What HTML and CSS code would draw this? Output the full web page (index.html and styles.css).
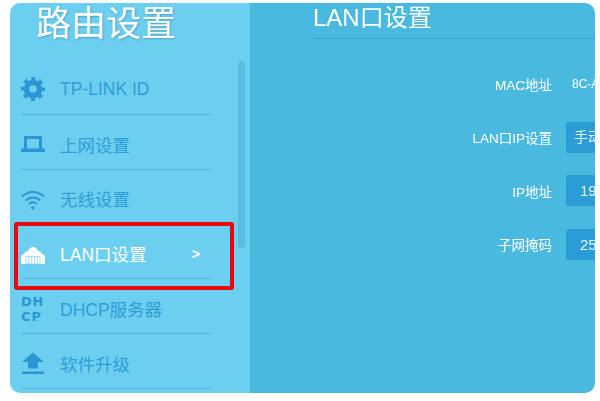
FILE: index.html
```html
<!DOCTYPE html>
<html lang="en">
<head>
<meta charset="UTF-8">
<meta name="viewport" content="width=device-width, initial-scale=1.0">
<title>路由设置</title>
<link rel="stylesheet" href="styles.css">
</head>
<body>
    <div class="panel">
        <div class="sidebar">
            <h1 class="side-title">路由设置</h1>
            <ul class="menu">
                <li class="menu-item">
                    <svg class="menu-icon" viewBox="0 0 24 24" fill="none" stroke="currentColor"><circle cx="12" cy="12" r="6.500" stroke-width="5.500"/><circle cx="12" cy="12" r="10.300" stroke-width="3.400" stroke-dasharray="4 4.090" stroke-dashoffset="2"/></svg>
                    <span>TP-LINK ID</span>
                </li>
                <li class="menu-item">
                    <svg class="menu-icon" viewBox="0 0 24 24"><path fill-rule="evenodd" d="M3 4h18v12.500h3V20H0v-3.500h3zm3 3v9.500h12V7z"/></svg>
                    <span>上网设置</span>
                </li>
                <li class="menu-item">
                    <svg class="menu-icon" viewBox="0 0 24 24" fill="none" stroke="currentColor"><g stroke-width="1.900"><path d="M1 9.500c6.500-6 15.500-6 22 0"/><path d="M4.800 13.500c4.300-4 10.100-4 14.400 0"/><path d="M8.300 17c2.200-2 5.200-2 7.400 0"/></g><circle cx="12" cy="20.800" r="1.700" fill="currentColor" stroke="none"/></svg>
                    <span>无线设置</span>
                </li>
                <li class="menu-item active">
                    <svg class="menu-icon" viewBox="0 0 24 24"><path d="M0 21v-5.500c0-2 1.300-3.300 3.200-3.500.6-1.800 2-2.800 3.600-2.800C8 6.800 9.800 5 12 5s4 1.800 5.200 4.200c1.600 0 3 1 3.600 2.800 1.900.2 3.200 1.500 3.200 3.500V21c0 .6-.4 1-1 1H1c-.6 0-1-.4-1-1z"/><path class="icon-grid" d="M5 14.500h14V22H5zM7.800 14.500V22M10.600 14.500V22M13.400 14.500V22M16.200 14.500V22"/></svg>
                    <span>LAN口设置</span>
                    <span class="arrow">&gt;</span>
                </li>
                <li class="menu-item">
                    <span class="dhcp-icon">DH<br>CP</span>
                    <span>DHCP服务器</span>
                </li>
                <li class="menu-item">
                    <svg class="menu-icon" viewBox="0 0 24 24"><path d="M12 1.500l11 9.500h-6v6.500H7V11H1zM1 20.500h22v2.500H1z"/></svg>
                    <span>软件升级</span>
                </li>
            </ul>
            <div class="scrollbar"></div>
        </div>
        <div class="content">
            <h2 class="content-title">LAN口设置</h2>
            <div class="form">
                <div class="form-row">
                    <label class="form-label">MAC地址</label>
                    <span class="mac-value">8C-A6</span>
                </div>
                <div class="form-row">
                    <label class="form-label">LAN口IP设置</label>
                    <div class="field field-select">手动</div>
                </div>
                <div class="form-row">
                    <label class="form-label">IP地址</label>
                    <div class="field">192.168.1.1</div>
                </div>
                <div class="form-row">
                    <label class="form-label">子网掩码</label>
                    <div class="field">255.255.255.0</div>
                </div>
            </div>
        </div>
    </div>
</body>
</html>
```

FILE: styles.css
```css
body {
    font-family: "Liberation Sans", "Noto Sans CJK SC", sans-serif;
    margin: 0;
    padding: 3px 5px 8px 10px;
    background-color: #fff;
    overflow: hidden;
}
.panel {
    display: flex;
    width: 585px;
    height: 390px;
    border-radius: 10px;
    overflow: hidden;
    filter: blur(0.5px);
}
.sidebar {
    position: relative;
    flex: 0 0 240px;
    background-color: #6dcff0;
}
.side-title {
    margin: 0;
    padding-left: 26px;
    height: 57px;
    font-size: 35px;
    font-weight: 400;
    line-height: 42px;
    color: #fff;
    text-shadow: 1px 1px 2px rgba(40, 120, 160, 0.5);
}
.menu {
    list-style: none;
    margin: 0 0 0 11px;
    padding: 0;
    width: 191px;
}
.menu-item {
    position: relative;
    display: flex;
    align-items: center;
    box-sizing: border-box;
    height: 54.8px;
    padding-top: 5px;
    border-bottom: 1px solid #52b8e0;
    font-size: 17.5px;
    color: #2f9ed9;
}
.menu-icon {
    flex: 0 0 24px;
    width: 24px;
    height: 24px;
    margin-right: 15px;
    color: #2a96d3;
    fill: currentColor;
}
.menu-icon[fill="none"] {
    fill: none;
}
.icon-grid {
    fill: none;
    stroke: #6dcff0;
    stroke-width: 0.6;
}
.menu-item.active {
    color: #fff;
}
.menu-item.active .menu-icon {
    color: #fff;
}
.menu-item.active::after {
    content: "";
    position: absolute;
    left: -7px;
    top: -2px;
    width: 212px;
    height: 60px;
    border: 4px solid #e8070f;
    border-radius: 3px;
}
.arrow {
    margin-left: auto;
    margin-right: 12px;
    font-size: 14px;
    font-weight: 700;
}
.dhcp-icon {
    flex: 0 0 24px;
    margin-right: 15px;
    font-family: "DejaVu Sans", sans-serif;
    font-size: 12.800px;
    font-weight: 700;
    letter-spacing: 1px;
    line-height: 15px;
    color: #2a96d3;
}
.scrollbar {
    position: absolute;
    top: 58px;
    right: 5px;
    width: 7px;
    height: 187px;
    border-radius: 4px;
    background-color: #57bde3;
}
.content {
    flex: 1;
    min-width: 0;
    overflow: hidden;
    padding-left: 63px;
    background-color: #4ab9e0;
}
.content-title {
    margin: 0;
    height: 35px;
    border-bottom: 1px solid #3aa2cd;
    font-size: 24px;
    font-weight: 400;
    line-height: 29px;
    color: #fff;
}
.form {
    display: flex;
    flex-direction: column;
    gap: 22.500px;
    margin-top: 29px;
}
.form-row {
    display: flex;
    align-items: center;
    height: 31px;
    white-space: nowrap;
}
.form-label {
    flex: 0 0 239px;
    margin-right: 14px;
    text-align: right;
    font-size: 13.500px;
    color: #fff;
}
.mac-value {
    margin-left: 6px;
    font-size: 12px;
    color: #fff;
}
.field {
    flex: 0 0 180px;
    box-sizing: border-box;
    height: 31px;
    padding-left: 14px;
    border-radius: 3px;
    background-color: #2c9cd7;
    font-size: 15px;
    line-height: 31px;
    color: #e4f4fb;
}
.field-select {
    padding-left: 8px;
    font-size: 14px;
}
```
